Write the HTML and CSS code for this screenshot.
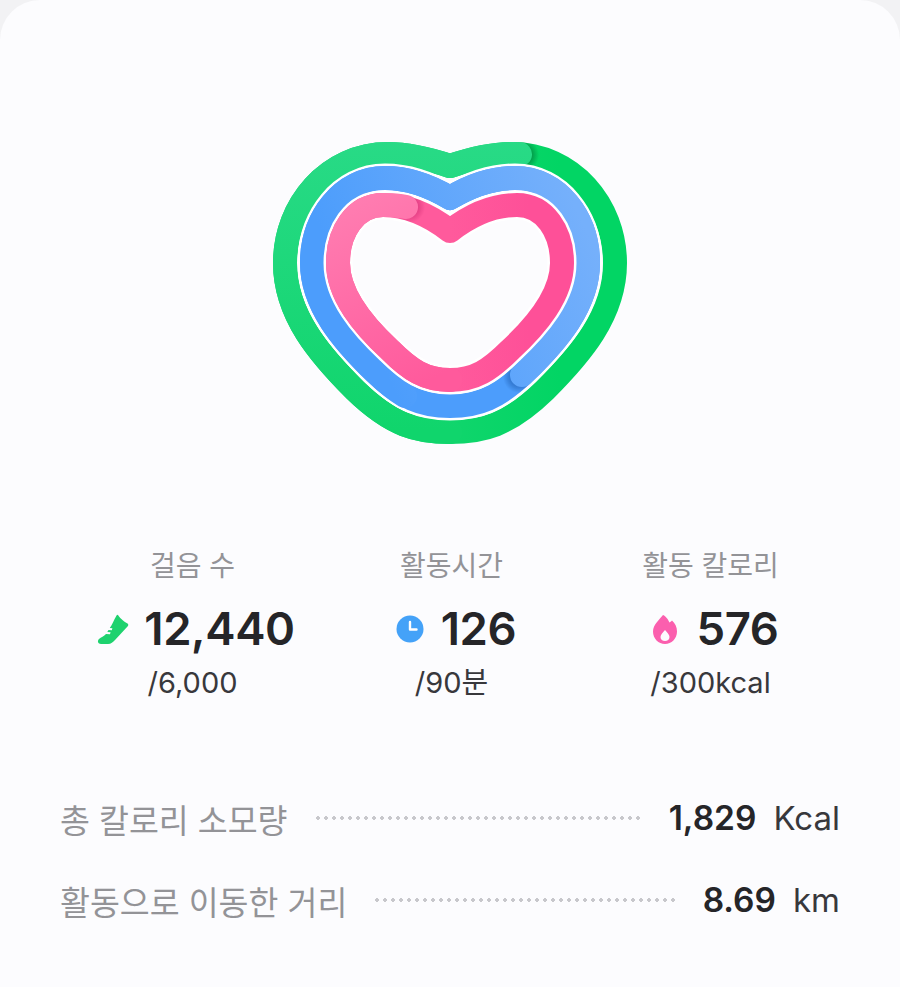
FILE: index.html
```html
<!DOCTYPE html>
<html lang="ko">
<head>
    <meta charset="UTF-8">
    <meta name="viewport" content="width=device-width, initial-scale=1.0">
    <title>오늘의 활동</title>
    <link rel="stylesheet" href="styles.css">
</head>
<body>
    <div class="card">
        <div class="ring-area">
            <svg class="rings" width="360" height="310" viewBox="270 140 360 310">
                <defs>
                    <path id="heartGreen" d="M450 166C468 160 490 154 512 154C572 154 615 205 615 263C615 315 580 355 545 390C508 426 482 432 450 432C418 432 392 426 355 390C320 355 285 315 285 263C285 205 328 154 388 154C410 154 432 160 450 166Z"/>
                    <path id="heartBlue" d="M450 198C470 186 492 178 515 178C558 178 588 218 588 263C588 305 557 341 525 372C498 398 478 406 450 406C422 406 402 398 375 372C343 341 312 305 312 263C312 218 342 178 385 178C408 178 430 186 450 198Z"/>
                    <path id="heartPink" d="M450 231C468 217 490 205 517 205C545 205 562 232 562 263C562 295 537 325 510 350C490 370 475 380 450 380C425 380 410 370 390 350C363 325 338 295 338 263C338 232 355 205 383 205C410 205 432 217 450 231Z"/>

                    <linearGradient id="greenBase" gradientUnits="userSpaceOnUse" x1="450" y1="0" x2="560" y2="0">
                        <stop offset="0" stop-color="#10d56c"/>
                        <stop offset="1" stop-color="#02d564"/>
                    </linearGradient>
                    <linearGradient id="greenTop" gradientUnits="userSpaceOnUse" x1="400" y1="142" x2="400" y2="430">
                        <stop offset="0" stop-color="#28da86"/>
                        <stop offset="1" stop-color="#10d56c"/>
                    </linearGradient>
                    <linearGradient id="blueTop" gradientUnits="userSpaceOnUse" x1="600" y1="260" x2="380" y2="360">
                        <stop offset="0" stop-color="#75b0fb"/>
                        <stop offset="1" stop-color="#4c9dfc"/>
                    </linearGradient>
                    <linearGradient id="pinkBase" gradientUnits="userSpaceOnUse" x1="450" y1="0" x2="530" y2="0">
                        <stop offset="0" stop-color="#ff5a9c"/>
                        <stop offset="1" stop-color="#fe5098"/>
                    </linearGradient>
                    <linearGradient id="pinkTop" gradientUnits="userSpaceOnUse" x1="350" y1="200" x2="440" y2="375">
                        <stop offset="0" stop-color="#ff7db1"/>
                        <stop offset="1" stop-color="#ff5a9c"/>
                    </linearGradient>
                    <radialGradient id="capShadow">
                        <stop offset="0.6" stop-color="#00307a" stop-opacity="0.3"/>
                        <stop offset="1" stop-color="#00307a" stop-opacity="0"/>
                    </radialGradient>
                    <radialGradient id="capShadowGreen">
                        <stop offset="0.6" stop-color="#005a28" stop-opacity="0.4"/>
                        <stop offset="1" stop-color="#005a28" stop-opacity="0"/>
                    </radialGradient>
                    <radialGradient id="capShadowPink">
                        <stop offset="0.6" stop-color="#b0105a" stop-opacity="0.3"/>
                        <stop offset="1" stop-color="#b0105a" stop-opacity="0"/>
                    </radialGradient>
                    <mask id="maskGreen" maskUnits="userSpaceOnUse" x="270" y="140" width="360" height="310">
                        <use href="#heartGreen" class="ring" stroke="#fff"/>
                    </mask>
                    <mask id="maskBlue" maskUnits="userSpaceOnUse" x="270" y="140" width="360" height="310">
                        <use href="#heartBlue" class="ring" stroke="#fff"/>
                    </mask>
                    <mask id="maskPink" maskUnits="userSpaceOnUse" x="270" y="140" width="360" height="310">
                        <use href="#heartPink" class="ring" stroke="#fff"/>
                    </mask>
                </defs>

                <!-- 걸음 -->
                <use href="#heartGreen" class="ring" stroke="url(#greenBase)"/>
                <g mask="url(#maskGreen)"><circle cx="523" cy="155" r="16" fill="url(#capShadowGreen)"/></g>
                <path class="ring cap" stroke="url(#greenTop)" d="M520 154.300C517 154 515 154 512 154C490 154 468 160 450 166C432 160 410 154 388 154C328 154 285 205 285 263C285 315 320 355 355 390C392 426 418 432 450 432"/>

                <!-- 활동시간 -->
                <use href="#heartBlue" class="gap"/>
                <use href="#heartBlue" class="ring" stroke="#4c9dfc"/>
                <g mask="url(#maskBlue)"><circle cx="519" cy="377" r="16" fill="url(#capShadow)"/></g>
                <path class="ring cap" stroke="url(#blueTop)" d="M522 375L525 372C557 341 588 305 588 263C588 218 558 178 515 178C492 178 470 186 450 198C430 186 408 178 385 178C342 178 312 218 312 263C312 305 343 341 375 372C385 382 395 390 405 396"/>

                <!-- 활동 칼로리 -->
                <use href="#heartPink" class="gap"/>
                <use href="#heartPink" class="ring" stroke="url(#pinkBase)"/>
                <g mask="url(#maskPink)"><circle cx="409" cy="207" r="16" fill="url(#capShadowPink)"/></g>
                <path class="ring cap" stroke="url(#pinkTop)" d="M406 207C399 205.500 391 205 383 205C355 205 338 232 338 263C338 295 363 325 390 350C410 370 425 380 450 380"/>
            </svg>
        </div>

        <div class="stats">
            <div class="stat">
                <div class="stat-label">걸음 수</div>
                <div class="stat-value">
                    <svg class="stat-icon" width="32" height="32" viewBox="0 0 32 32">
                        <path fill="#1ed26e" d="M21 2C22 4 26 8 30.500 10.500C31.500 11.200 31.500 12.500 30.500 13.500L18 27C16 29 14 31 11 31L4 31C1 31 0 28 2 26C4 24 7 23.500 9 21L13 21.200L13.600 19.200L10.300 19L11.500 17L14.800 17.200L15.400 15.200L12.800 15C15 12 17 7 19 3.500C19.500 2.500 20.500 1.500 21 2Z"/>
                    </svg>
                    <span>12,440</span>
                </div>
                <div class="stat-goal">/6,000</div>
            </div>
            <div class="stat">
                <div class="stat-label">활동시간</div>
                <div class="stat-value">
                    <svg class="stat-icon" width="32" height="32" viewBox="0 0 32 32">
                        <circle cx="16" cy="16" r="13.500" fill="#44a2f8"/>
                        <path d="M16 9V16.500H22.500" fill="none" stroke="#fff" stroke-width="2.400" stroke-linecap="round" stroke-linejoin="round"/>
                    </svg>
                    <span>126</span>
                </div>
                <div class="stat-goal">/90분</div>
            </div>
            <div class="stat">
                <div class="stat-label">활동 칼로리</div>
                <div class="stat-value">
                    <svg class="stat-icon" width="32" height="32" viewBox="0 0 32 32">
                        <path fill="#fb5fae" fill-rule="evenodd" d="M14 2C15.500 2 19 6 20.500 9.500C21.500 9 22.500 8 23 7.500C26 10 28 14 28 18.500C28 25.500 22.500 31 16 31C9.500 31 4 25.500 4 18.500C4 11.500 11 6 14 2ZM16 17C14 19.500 11.500 21.500 11.500 24C11.500 26.500 13.500 28 16 28C18.500 28 20.500 26.500 20.500 24C20.500 21.500 18 19.500 16 17Z"/>
                    </svg>
                    <span>576</span>
                </div>
                <div class="stat-goal">/300kcal</div>
            </div>
        </div>

        <div class="totals">
            <div class="total-row">
                <span class="total-label">총 칼로리 소모량</span>
                <span class="total-dots"></span>
                <span class="total-num">1,829</span>
                <span class="total-unit">Kcal</span>
            </div>
            <div class="total-row">
                <span class="total-label">활동으로 이동한 거리</span>
                <span class="total-dots"></span>
                <span class="total-num">8.69</span>
                <span class="total-unit">km</span>
            </div>
        </div>
    </div>
</body>
</html>
```

FILE: styles.css
```css
body {
    margin: 0;
    background-color: #f2f2f4;
    font-family: Inter, "Noto Sans CJK KR", sans-serif;
    color: #252528;
}

.card {
    height: 987px;
    box-sizing: border-box;
    background-color: #fcfcfe;
    border-radius: 40px 40px 0 0;
    padding: 140px 60px 0 60px;
    overflow: hidden;
}

.ring-area {
    display: flex;
    justify-content: center;
}

.rings {
    display: block;
}

.ring {
    fill: none;
    stroke-width: 24;
    stroke-linejoin: round;
}

.ring.cap {
    stroke-linecap: round;
}

.gap {
    fill: none;
    stroke: #ffffff;
    stroke-width: 29;
    stroke-linejoin: round;
}

.stats {
    display: grid;
    grid-template-columns: repeat(3, 1fr);
    margin-top: 94px;
    padding-left: 3px;
    text-align: center;
}

.stat-label {
    font-family: "Noto Sans CJK KR", sans-serif;
    font-size: 28px;
    line-height: 40px;
    color: #939397;
    font-weight: 400;
}

.stat-value {
    display: flex;
    justify-content: center;
    align-items: center;
    gap: 15px;
    padding-left: 7px;
    font-size: 45.500px;
    line-height: 56px;
    font-weight: 600;
    letter-spacing: -0.4px;
    margin-top: 17px;
}

.stat-goal {
    font-size: 29px;
    line-height: 40px;
    margin-top: 6px;
    color: #38383c;
}

.totals {
    margin-top: 74px;
}

.total-row {
    display: flex;
    align-items: center;
    height: 82px;
}

.total-label {
    font-family: "Noto Sans CJK KR", sans-serif;
    font-size: 32.500px;
    color: #939397;
    font-weight: 400;
}

.total-dots {
    flex: 1;
    margin: 0 26px;
    height: 4px;
    background-image: radial-gradient(circle, #c8c8cc 1.600px, transparent 2px);
    background-size: 8px 4px;
}

.total-num {
    font-size: 33.500px;
    font-weight: 600;
}

.total-unit {
    font-size: 33px;
    margin-left: 17px;
    color: #38383c;
}
```
